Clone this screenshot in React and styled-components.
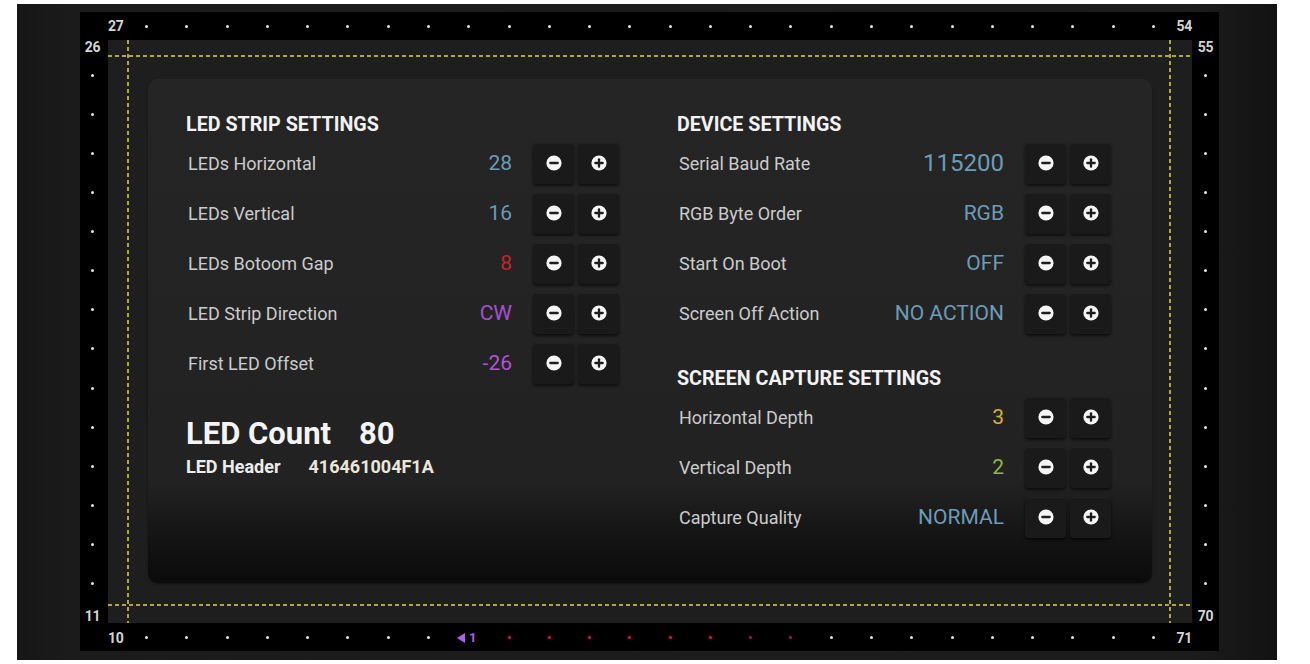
import React from 'react';
import styled, { createGlobalStyle } from 'styled-components';

const Global = createGlobalStyle`
  html, body { margin: 0; padding: 0; background: #ffffff; }
  body { font-family: Roboto, "Noto Sans", "Liberation Sans", sans-serif; }
  #root { width: 1310px; height: 664px; }
`;

const Page = styled.div`
  width: 1310px;
  height: 664px;
  box-sizing: border-box;
  padding: 4px 33px 4px 17px;
  background: #ffffff;
`;

const Screen = styled.div`
  width: 100%;
  height: 100%;
  box-sizing: border-box;
  padding: 8px 58px 9px 63px;
  background: linear-gradient(90deg, #161616 0%, #1b1b1b 4%, #1d1d1d 60%, #1c1c1c 93%, #121212 100%);
`;

const Frame = styled.div`
  width: 100%;
  height: 100%;
  background: #000;
  display: grid;
  grid-template-columns: 28px 1fr 27px;
  grid-template-rows: 28px 1fr 28px;
`;

const HStrip = styled.div`
  grid-column: 2;
  grid-row: ${(p) => p.$row};
  display: flex;
  align-items: center;
  padding-top: ${(p) => (p.$row === 3 ? '1px' : '0')};
`;

const VStrip = styled.div`
  grid-row: 2;
  grid-column: ${(p) => p.$col};
  display: flex;
  flex-direction: column;
  align-items: center;
  padding-right: ${(p) => (p.$col === 1 ? '3px' : '0')};
`;

const Num = styled.span`
  font-size: 14px;
  font-weight: 700;
  line-height: 14px;
  color: #d4d4d4;
  letter-spacing: -0.3px;
`;

const HDots = styled.div`
  flex: 1;
  display: flex;
  justify-content: space-between;
  align-items: center;
  padding: 0 21px;
`;

const VDots = styled.div`
  flex: 1;
  display: flex;
  flex-direction: column;
  justify-content: space-between;
  align-items: center;
  padding: 19px 0 23px;
`;

const Slot = styled.span`
  width: 4px;
  height: 4px;
  display: flex;
  align-items: center;
  justify-content: center;
  overflow: visible;
`;

const Dot = styled.span`
  flex: none;
  width: 3px;
  height: 3px;
  border-radius: 50%;
  background: ${(p) => p.$color || '#e4e4e4'};
  box-shadow: ${(p) => (p.$glow ? `0 0 3px 1px ${p.$glow}` : 'none')};
`;

const Marker = styled.span`
  flex: none;
  display: flex;
  align-items: center;
  gap: 4px;
  color: #b45fe6;
  font-size: 13px;
  font-weight: 700;
  line-height: 13px;
  white-space: nowrap;
  margin-left: -4px;
`;

const Inner = styled.div`
  grid-row: 2;
  grid-column: 2;
  position: relative;
  background: #1e1e1e;
  padding: 39px 40px 40px 40px;
  display: flex;
`;

const GuideH = styled.div`
  position: absolute;
  left: 0;
  right: 0;
  height: 2px;
  ${(p) => (p.$bottom ? 'bottom: 17px;' : 'top: 15px;')}
  background: repeating-linear-gradient(90deg, #aea93c 0 4px, transparent 4px 7px);
`;

const GuideV = styled.div`
  position: absolute;
  top: 0;
  bottom: 0;
  width: 2px;
  ${(p) => (p.$right ? 'right: 21px;' : 'left: 19px;')}
  background: repeating-linear-gradient(180deg, #aea93c 0 4px, transparent 4px 7px);
`;

const Panel = styled.div`
  flex: 1;
  border-radius: 10px;
  background: linear-gradient(180deg, #252525 0%, #222222 80%, #151515 90%, #0b0b0b 100%);
  box-shadow: 0 1px 2px rgba(0, 0, 0, 0.45);
  padding: 33px 41px 0 38px;
  display: grid;
  grid-template-columns: 433px 434px;
  column-gap: 58px;
  align-content: start;
`;

const Column = styled.div`
  display: flex;
  flex-direction: column;
`;

const Heading = styled.h2`
  margin: ${(p) => p.$gap || 0}px 0 0;
  height: 26px;
  font-size: 19.7px;
  font-weight: 700;
  line-height: 26px;
  color: #f2f2f2;
  white-space: nowrap;
`;

const Row = styled.div`
  height: 50px;
  display: flex;
  align-items: center;
`;

const Label = styled.span`
  flex: 1;
  padding-left: 2px;
  font-size: 18px;
  color: #cbcbcb;
`;

const Value = styled.span`
  margin-right: 21px;
  font-size: ${(p) => p.$size || 21}px;
  color: ${(p) => p.$color};
`;

const Buttons = styled.div`
  display: flex;
  gap: 4px;
`;

const StepButton = styled.button`
  width: 41px;
  height: 41px;
  padding: 0;
  border: none;
  border-radius: 4px;
  background: #1a1a1a;
  box-shadow: 0 2px 3px rgba(0, 0, 0, 0.6), inset 0 1px 0 rgba(255, 255, 255, 0.035);
  display: flex;
  align-items: center;
  justify-content: center;
`;

const CountLine = styled.div`
  margin-top: 29px;
  display: flex;
  gap: 28px;
  font-size: 31px;
  font-weight: 700;
  line-height: 34px;
  color: #f4f4f4;
`;

const HeaderLine = styled.div`
  margin-top: 6px;
  display: flex;
  gap: 28px;
  font-size: 18px;
  font-weight: 700;
  line-height: 20px;
  color: #ececec;
`;

const HeaderValue = styled.span`
  color: #ebe6da;
`;

const BLUE = '#6b9cb8';

const Icon = ({ plus }) => (
  <svg width="16" height="16" viewBox="0 0 16 16">
    <circle cx="8" cy="8" r="7.6" fill="#f5f5f5" />
    <line x1="4.3" y1="8" x2="11.7" y2="8" stroke="#1d1d1d" strokeWidth="2.3" strokeLinecap="round" />
    {plus && <line x1="8" y1="4.3" x2="8" y2="11.7" stroke="#1d1d1d" strokeWidth="2.3" strokeLinecap="round" />}
  </svg>
);

const Setting = ({ label, value, color, size }) => (
  <Row>
    <Label>{label}</Label>
    <Value $color={color} $size={size}>{value}</Value>
    <Buttons>
      <StepButton aria-label="decrease"><Icon /></StepButton>
      <StepButton aria-label="increase"><Icon plus /></StepButton>
    </Buttons>
  </Row>
);

const Triangle = () => (
  <svg width="8" height="10" viewBox="0 0 8 10">
    <polygon points="8,0 8,10 0,5" fill="#b45fe6" />
  </svg>
);

const range = (n) => Array.from({ length: n }, (_, i) => i);

const bottomSlots = range(26).map((i) => {
  if (i === 8) return 'marker';
  if (i >= 9 && i <= 14) return 'red';
  if (i === 15 || i === 16) return 'dimred';
  return 'white';
});

export default function App() {
  return (
    <>
      <Global />
      <Page>
        <Screen>
          <Frame>
            <HStrip $row={1}>
              <Num>27</Num>
              <HDots>
                {range(26).map((i) => (
                  <Slot key={i}><Dot /></Slot>
                ))}
              </HDots>
              <Num>54</Num>
            </HStrip>

            <VStrip $col={1}>
              <Num>26</Num>
              <VDots>
                {range(14).map((i) => (
                  <Slot key={i}><Dot /></Slot>
                ))}
              </VDots>
              <Num>11</Num>
            </VStrip>

            <Inner>
              <GuideH />
              <GuideH $bottom />
              <GuideV />
              <GuideV $right />
              <Panel>
                <Column>
                  <Heading>LED STRIP SETTINGS</Heading>
                  <Setting label="LEDs Horizontal" value="28" color={BLUE} />
                  <Setting label="LEDs Vertical" value="16" color={BLUE} />
                  <Setting label="LEDs Botoom Gap" value="8" color="#c5232b" />
                  <Setting label="LED Strip Direction" value="CW" color="#a94fd2" />
                  <Setting label="First LED Offset" value="-26" color="#ae55d8" />
                  <CountLine>
                    <span>LED Count</span>
                    <span>80</span>
                  </CountLine>
                  <HeaderLine>
                    <span>LED Header</span>
                    <HeaderValue>416461004F1A</HeaderValue>
                  </HeaderLine>
                </Column>
                <Column>
                  <Heading>DEVICE SETTINGS</Heading>
                  <Setting label="Serial Baud Rate" value="115200" color={BLUE} size={24} />
                  <Setting label="RGB Byte Order" value="RGB" color={BLUE} />
                  <Setting label="Start On Boot" value="OFF" color={BLUE} />
                  <Setting label="Screen Off Action" value="NO ACTION" color={BLUE} />
                  <Heading $gap={28}>SCREEN CAPTURE SETTINGS</Heading>
                  <Setting label="Horizontal Depth" value="3" color="#d6b23a" />
                  <Setting label="Vertical Depth" value="2" color="#8fb83c" />
                  <Setting label="Capture Quality" value="NORMAL" color={BLUE} />
                </Column>
              </Panel>
            </Inner>

            <VStrip $col={3}>
              <Num>55</Num>
              <VDots>
                {range(14).map((i) => (
                  <Slot key={i}><Dot /></Slot>
                ))}
              </VDots>
              <Num>70</Num>
            </VStrip>

            <HStrip $row={3}>
              <Num>10</Num>
              <HDots>
                {bottomSlots.map((kind, i) => (
                  <Slot key={i}>
                    {kind === 'marker' ? (
                      <Marker><Triangle />1</Marker>
                    ) : kind === 'red' ? (
                      <Dot $color="#b0283f" $glow="rgba(150,20,50,0.45)" />
                    ) : kind === 'dimred' ? (
                      <Dot $color="#6e3444" $glow="rgba(110,30,50,0.35)" />
                    ) : (
                      <Dot />
                    )}
                  </Slot>
                ))}
              </HDots>
              <Num>71</Num>
            </HStrip>
          </Frame>
        </Screen>
      </Page>
    </>
  );
}
